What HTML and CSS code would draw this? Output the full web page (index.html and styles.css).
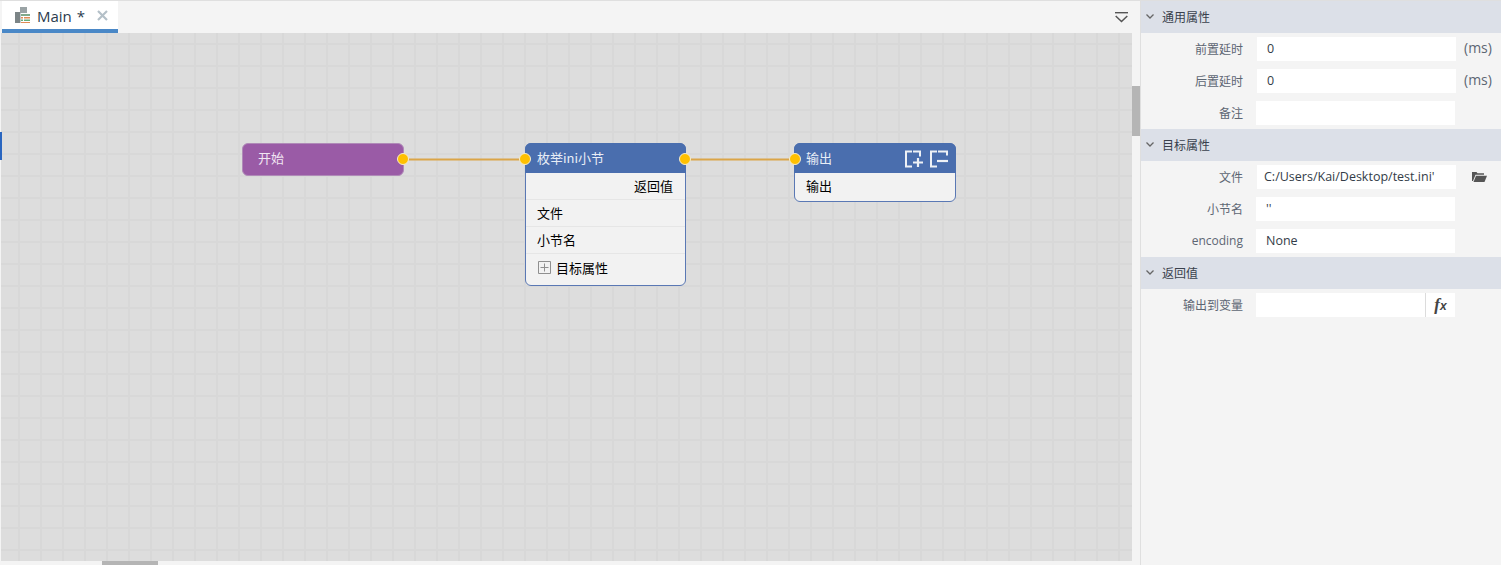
FILE: index.html
```html
<!DOCTYPE html>
<html lang="en">
<head>
  <meta charset="UTF-8" />
  <title>Main</title>
  <link rel="stylesheet" href="styles.css">
</head>
<body>
  <div class="app">
    <div class="main">
      <div class="tabbar">
        <div class="tab">
          <svg class="tab-icon" width="15" height="16" viewBox="0 0 15 16">
            <path d="M0 5h5v11H0z" fill="#7b8486"/>
            <path d="M5 0h7v6H5z" fill="#9aa3a5"/>
            <path d="M5 6h1v10H5z" fill="#c4cacb"/>
            <path d="M6 7h9v2H6z" fill="#7fa98a"/>
            <path d="M6 10h2v1.500H6zM9 10h6v1.500H9z" fill="#e08a55"/>
            <path d="M6 12.500h2V14H6zM9 12.500h6V14H9z" fill="#68ad7a"/>
            <path d="M6 15h9v1H6z" fill="#e08a55"/>
          </svg>
          <span class="tab-name">Main</span>
          <span class="tab-mod">*</span>
          <svg class="tab-close" width="11" height="11" viewBox="0 0 11 11">
            <path d="M1 1l9 9M10 1l-9 9" stroke="#b4c0c8" stroke-width="2.200" fill="none"/>
          </svg>
        </div>
        <svg class="tab-menu" width="13" height="11" viewBox="0 0 13 11">
          <path d="M0 .700h13" stroke="#555" stroke-width="1.400" fill="none"/>
          <path d="M.7 4l5.800 5.500L12.300 4" stroke="#555" stroke-width="1.500" fill="none"/>
        </svg>
      </div>

      <div class="workspace">
        <div class="canvas">
          <div class="marker"></div>

          <svg class="wires" width="1131" height="528">
            <path d="M402 126.500H525M685 126.500H795" stroke="#dba548" stroke-width="2" fill="none"/>
          </svg>

          <div class="node node-start">
            <span>开始</span>
            <i class="port port-right"></i>
          </div>

          <div class="node node-enum">
            <div class="node-head">
              <span>枚举ini小节</span>
              <i class="port port-left"></i>
              <i class="port port-right"></i>
            </div>
            <div class="node-row align-right">返回值</div>
            <div class="node-row">文件</div>
            <div class="node-row">小节名</div>
            <div class="node-row node-row-last">
              <svg class="expand" width="13" height="13" viewBox="0 0 13 13">
                <path d="M.5.500h12v12H.5z" fill="#f2f2f2" stroke="#8f8f8f"/>
                <path d="M6.500 2.500v8M2.500 6.500h8" stroke="#8f8f8f" fill="none"/>
              </svg>
              目标属性
            </div>
          </div>

          <div class="node node-output">
            <div class="node-head">
              <span>输出</span>
              <i class="port port-left"></i>
              <div class="head-btns">
                <svg width="19" height="18" viewBox="0 0 19 18">
                  <path d="M7 1.500H1v15h6M8 1.500h7v5" stroke="#eef1f6" stroke-width="2" fill="none"/>
                  <path d="M13 8v9M8 12.500h10" stroke="#eef1f6" stroke-width="2.200" fill="none"/>
                </svg>
                <svg width="19" height="18" viewBox="0 0 19 18">
                  <path d="M7 1.500H1v15h6M8 1.500h9v4" stroke="#eef1f6" stroke-width="2" fill="none"/>
                  <path d="M7 11h11" stroke="#eef1f6" stroke-width="2.200" fill="none"/>
                </svg>
              </div>
            </div>
            <div class="node-row node-row-last">输出</div>
          </div>
        </div>
        <div class="vscroll"><div class="vthumb"></div></div>
      </div>

      <div class="hscroll"><div class="hthumb"></div></div>
    </div>

    <div class="panel">
      <div class="section-head">
        <svg width="8" height="5" viewBox="0 0 8 5"><path d="M.5.500L4 4 7.500.500" stroke="#666" stroke-width="1.300" fill="none"/></svg>
        通用属性
      </div>
      <div class="row">
        <label>前置延时</label>
        <div class="field shift">0</div>
        <span class="suffix">(ms)</span>
      </div>
      <div class="row">
        <label>后置延时</label>
        <div class="field shift">0</div>
        <span class="suffix">(ms)</span>
      </div>
      <div class="row">
        <label>备注</label>
        <div class="field"></div>
      </div>

      <div class="section-head">
        <svg width="8" height="5" viewBox="0 0 8 5"><path d="M.5.500L4 4 7.500.500" stroke="#666" stroke-width="1.300" fill="none"/></svg>
        目标属性
      </div>
      <div class="row">
        <label>文件</label>
        <div class="field shift field-path">C:/Users/Kai/Desktop/test.ini'</div>
        <svg class="folder" width="15" height="11" viewBox="0 0 15 11">
          <path d="M0 10V1h4.500l1 1.300H12v1.500H3.500L1 10z" fill="#555"/>
          <path d="M4 4.800h11L12.500 11H1.500z" fill="#555"/>
        </svg>
      </div>
      <div class="row">
        <label>小节名</label>
        <div class="field">''</div>
      </div>
      <div class="row">
        <label>encoding</label>
        <div class="field">None</div>
      </div>

      <div class="section-head">
        <svg width="8" height="5" viewBox="0 0 8 5"><path d="M.5.500L4 4 7.500.500" stroke="#666" stroke-width="1.300" fill="none"/></svg>
        返回值
      </div>
      <div class="row">
        <label>输出到变量</label>
        <div class="field field-fx"><span class="fx">f<small>x</small></span></div>
      </div>
    </div>
  </div>
</body>
</html>
```

FILE: styles.css
```css
* {
  box-sizing: border-box;
}
body {
  margin: 0;
  background: #f4f4f4;
  font-family: "Noto Sans CJK SC", "Noto Sans", sans-serif;
  font-size: 13px;
  overflow: hidden;
}
.app {
  display: flex;
  height: 565px;
  border-top: 1px solid #dfdfdf;
}
.main {
  width: 1140px;
  display: flex;
  flex-direction: column;
}

/* tabs */
.tabbar {
  height: 32px;
  padding-left: 2px;
  display: flex;
  justify-content: space-between;
  background: #f4f4f4;
}
.tab {
  width: 116px;
  height: 32px;
  padding-left: 13px;
  display: flex;
  align-items: center;
  background: #fff;
  border-bottom: 4px solid #4a88c7;
  font-family: "Open Sans", sans-serif;
  font-size: 15px;
  line-height: 31px;
  color: #2b3b4e;
}
.tab-name {
  margin-left: 7px;
  padding-top: 3px;
}
.tab-mod {
  margin-left: 5px;
  padding-top: 3px;
}
.tab-close {
  margin-left: 12px;
}
.tab-menu {
  margin: 11px 12px 0 0;
}

/* canvas */
.workspace {
  flex: 1;
  display: flex;
  min-height: 0;
}
.canvas {
  position: relative;
  flex: 1;
  margin-left: 1px;
  background-color: #dddddd;
  background-image:
    linear-gradient(to right, #d8d8d8 2px, transparent 2px),
    linear-gradient(to bottom, #d8d8d8 2px, transparent 2px);
  background-size: 22px 22px;
  background-position: 17px 10px;
}
.marker {
  position: absolute;
  left: -1px;
  top: 99px;
  width: 2px;
  height: 28px;
  background: #2a66c0;
}
.wires {
  position: absolute;
  left: 0;
  top: 0;
}
.vscroll {
  width: 8px;
  background: #f4f4f4;
}
.vthumb {
  width: 8px;
  height: 50px;
  margin-top: 53px;
  background: #b5b5b5;
}
.hscroll {
  height: 4px;
  background: #f4f4f4;
}
.hthumb {
  width: 56px;
  height: 4px;
  margin-left: 102px;
  background: #b5b5b5;
}

/* nodes */
.node {
  position: absolute;
  width: 162px;
  border-radius: 6px;
  color: #000;
}
.node-start {
  left: 241px;
  top: 110px;
  height: 33px;
  padding-left: 15px;
  line-height: 27px;
  background: #9a5ba6;
  border: 1px solid #b08ab8;
  color: #f1e6f3;
}
.node-enum {
  left: 524px;
  top: 110px;
  width: 161px;
  background: #f2f2f2;
  border: 1px solid #5a78b4;
}
.node-output {
  left: 793px;
  top: 110px;
  background: #f2f2f2;
  border: 1px solid #5a78b4;
}
.node-head {
  position: relative;
  height: 30px;
  margin: -1px -1px 0;
  padding-left: 12px;
  line-height: 30px;
  background: #4a6eae;
  border-radius: 6px 6px 0 0;
  color: #e8edf6;
}
.node-row {
  height: 27px;
  padding: 0 12px 1px 11px;
  border-bottom: 1px solid #e6e6e6;
  display: flex;
  align-items: center;
}
.node-row-last {
  height: 28px;
  padding-bottom: 3px;
  border-bottom: 0;
  border-radius: 0 0 6px 6px;
}
.node-enum .node-row-last {
  height: 31px;
  padding-bottom: 4px;
}
.align-right {
  justify-content: flex-end;
}
.expand {
  margin: 0 5px 0 1px;
}
.port {
  position: absolute;
  top: 10px;
  width: 12px;
  height: 12px;
  border-radius: 50%;
  background: #ffc000;
  border: 1px solid #f6eccd;
}
.port-left {
  left: -6px;
}
.port-right {
  right: -5px;
}
.node-start .port {
  top: 9px;
  right: -6px;
}
.node-output .port-left {
  left: -5px;
}
.head-btns {
  position: absolute;
  right: 7px;
  top: 7px;
  display: flex;
  gap: 6px;
}

/* property panel */
.panel {
  width: 361px;
  border-left: 1px solid #dfdfdf;
  background: #f4f4f4;
  font-size: 12px;
}
.section-head {
  height: 32px;
  padding: 0 0 2px 5px;
  display: flex;
  align-items: center;
  gap: 8px;
  background: #dce0e8;
  color: #39404c;
}
.row {
  height: 32px;
  display: flex;
  align-items: center;
  color: #5d6673;
}
.row label {
  width: 102px;
  padding-bottom: 1px;
  text-align: right;
  font-family: "Open Sans", "Noto Sans CJK SC", sans-serif;
}
.field {
  width: 199px;
  height: 24px;
  margin-left: 13px;
  padding-left: 10px;
  line-height: 24px;
  background: #fff;
  color: #333c48;
  font-family: "Open Sans", sans-serif;
  font-size: 12.5px;
}
.shift {
  margin-left: 14px;
}
.field-path {
  padding-left: 7px;
  white-space: nowrap;
  overflow: hidden;
}
.suffix {
  margin-left: 8px;
  padding-bottom: 3px;
  font-family: "Open Sans", sans-serif;
  font-size: 14px;
}
.folder {
  margin-left: 16px;
  margin-bottom: 2px;
}
.field-fx {
  display: flex;
  justify-content: flex-end;
  padding: 0;
}
.fx {
  width: 30px;
  border-left: 1px solid #dcdcdc;
  text-align: center;
  font-family: "Liberation Serif", serif;
  font-style: italic;
  font-weight: bold;
  font-size: 17px;
  color: #444;
}
.fx small {
  font-size: 12px;
  font-family: "Liberation Sans", sans-serif;
}
```
